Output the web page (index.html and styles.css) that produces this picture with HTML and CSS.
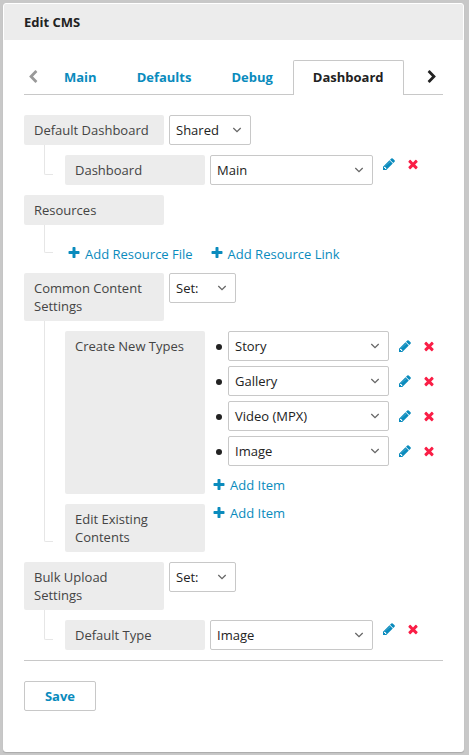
FILE: index.html
```html
<!DOCTYPE html>
<html lang="en">
<head>
<meta charset="utf-8">
<title>Edit CMS</title>
<link rel="stylesheet" href="styles.css">
</head>
<body>
<svg class="sprite" aria-hidden="true">
  <symbol id="pencil" viewBox="0 0 1792 1792"><path opacity=".7" d="M1014 608L491 1300 300 1290 350 1150 960 540z"/><path d="M491 1536l91-91-235-235-91 91v107h128v128h107zm523-928q0-22-22-22-10 0-17 7l-542 542q-7 7-7 17 0 22 22 22 10 0 17-7l542-542q7-7 7-17zm-54-192l416 416-832 832h-416v-416zm683 96q0 53-37 90l-166 166-416-416 166-165q36-38 90-38 53 0 91 38l235 234q37 39 37 91z"/></symbol>
  <symbol id="times" viewBox="0 0 1792 1792"><path d="M1490 1322q0 40-28 68l-136 136q-28 28-68 28t-68-28l-294-294-294 294q-28 28-68 28t-68-28l-136-136q-28-28-28-68t28-68l294-294-294-294q-28-28-28-68t28-68l136-136q28-28 68-28t68 28l294 294 294-294q28-28 68-28t68 28l136 136q28 28 28 68t-28 68l-294 294 294 294q28 28 28 68z"/></symbol>
  <symbol id="plus" viewBox="0 0 1792 1792"><path d="M1600 736v192q0 40-28 68t-68 28h-416v416q0 40-28 68t-68 28h-192q-40 0-68-28t-28-68v-416h-416q-40 0-68-28t-28-68v-192q0-40 28-68t68-28h416v-416q0-40 28-68t68-28h192q40 0 68 28t28 68v416h416q40 0 68 28t28 68z"/></symbol>
  <symbol id="prev" viewBox="0 0 1792 1792"><path d="M1427 301l-531 531 531 531q19 19 19 45t-19 45l-166 166q-19 19-45 19t-45-19l-742-742q-19-19-19-45t19-45l742-742q19-19 45-19t45 19l166 166q19 19 19 45t-19 45z"/></symbol>
  <symbol id="next" viewBox="0 0 1792 1792"><path d="M1363 877l-742 742q-19 19-45 19t-45-19l-166-166q-19-19-19-45t19-45l531-531-531-531q-19-19-19-45t19-45l166-166q19-19 45-19t45 19l742 742q19 19 19 45t-19 45z"/></symbol>
  <symbol id="caret" viewBox="0 0 10 6"><path d="M1.3 1L5 4.6 8.7 1" fill="none" stroke="#666" stroke-width="1.3"/></symbol>
</svg>
<main class="card">
  <h1 class="title">Edit CMS</h1>
  <div class="content">
    <nav class="tabs">
      <span class="arrow arrow-prev"><svg class="icon"><use href="#prev"/></svg></span>
      <a class="tab">Main</a>
      <a class="tab">Defaults</a>
      <a class="tab">Debug</a>
      <a class="tab active">Dashboard</a>
      <span class="arrow arrow-next"><svg class="icon"><use href="#next"/></svg></span>
    </nav>

    <div class="form">
      <div class="row">
        <div class="label">Default Dashboard</div>
        <div class="select shared">Shared<svg class="caret"><use href="#caret"/></svg></div>
      </div>
      <div class="nested">
        <div class="row">
          <div class="label">Dashboard</div>
          <div class="select wide">Main<svg class="caret"><use href="#caret"/></svg></div>
          <div class="actions raised"><svg class="icon edit"><use href="#pencil"/></svg><svg class="icon remove"><use href="#times"/></svg></div>
        </div>
      </div>

      <div class="row"><div class="label">Resources</div></div>
      <div class="nested links">
        <a class="add"><svg class="icon"><use href="#plus"/></svg>Add Resource File</a>
        <a class="add"><svg class="icon"><use href="#plus"/></svg>Add Resource Link</a>
      </div>

      <div class="row">
        <div class="label">Common Content Settings</div>
        <div class="select set">Set:<svg class="caret"><use href="#caret"/></svg></div>
      </div>
      <div class="nested">
        <div class="row stretch">
          <div class="label">Create New Types</div>
          <div class="list">
            <div class="item"><i class="dot"></i><div class="select">Story<svg class="caret"><use href="#caret"/></svg></div><div class="actions"><svg class="icon edit"><use href="#pencil"/></svg><svg class="icon remove"><use href="#times"/></svg></div></div>
            <div class="item"><i class="dot"></i><div class="select">Gallery<svg class="caret"><use href="#caret"/></svg></div><div class="actions"><svg class="icon edit"><use href="#pencil"/></svg><svg class="icon remove"><use href="#times"/></svg></div></div>
            <div class="item"><i class="dot"></i><div class="select">Video (MPX)<svg class="caret"><use href="#caret"/></svg></div><div class="actions"><svg class="icon edit"><use href="#pencil"/></svg><svg class="icon remove"><use href="#times"/></svg></div></div>
            <div class="item"><i class="dot"></i><div class="select">Image<svg class="caret"><use href="#caret"/></svg></div><div class="actions"><svg class="icon edit"><use href="#pencil"/></svg><svg class="icon remove"><use href="#times"/></svg></div></div>
            <a class="add item-add after-items"><svg class="icon"><use href="#plus"/></svg>Add Item</a>
          </div>
        </div>
        <div class="row">
          <div class="label">Edit Existing Contents</div>
          <div class="list"><a class="add item-add"><svg class="icon"><use href="#plus"/></svg>Add Item</a></div>
        </div>
      </div>

      <div class="row">
        <div class="label">Bulk Upload Settings</div>
        <div class="select set">Set:<svg class="caret"><use href="#caret"/></svg></div>
      </div>
      <div class="nested">
        <div class="row">
          <div class="label">Default Type</div>
          <div class="select wide">Image<svg class="caret"><use href="#caret"/></svg></div>
          <div class="actions raised"><svg class="icon edit"><use href="#pencil"/></svg><svg class="icon remove"><use href="#times"/></svg></div>
        </div>
      </div>
    </div>

    <div class="footer"><button class="save">Save</button></div>
  </div>
</main>
</body>
</html>
```

FILE: styles.css
```css
* { box-sizing: border-box; }

body {
  margin: 0;
  padding: 3px 5px 3px 3px;
  height: 755px;
  background: #c8c8c8;
  color: #222;
  font: 13px/18px "Open Sans", sans-serif;
}

.sprite { position: absolute; width: 0; height: 0; }

.card {
  height: 749px;
  background: #fff;
  border: 1px solid #fff;
  border-radius: 3px;
  box-shadow: 0 1px 1px #aaa;
}

.title {
  margin: 0;
  padding: 9px 20px;
  height: 36px;
  background: #ececec;
  font-size: 13px;
  line-height: 18px;
  font-weight: 700;
  border-radius: 2px 2px 0 0;
}

.content { padding: 20px 20px 0; }

.icon { display: block; flex: none; width: 14px; height: 14px; fill: currentColor; }

.tabs {
  display: flex;
  height: 35px;
  border-bottom: 1px solid #c8c8c8;
  font-weight: 700;
}

.tab {
  height: 35px;
  padding: 7px 19px 0;
  border: 1px solid transparent;
  border-bottom: 0;
  color: #0a8bbd;
}

.tab.active {
  color: #222;
  background: #fff;
  border-color: #c8c8c8;
  border-radius: 2px 2px 0 0;
}

.arrow { padding-top: 10px; }
.arrow-prev { width: 20px; padding-left: 1.6px; color: #999; }
.arrow-next { margin-left: auto; padding-right: 3.6px; }

.form {
  display: flex;
  flex-direction: column;
  gap: 10px;
  padding: 20px 0 10px;
}

.row { display: flex; gap: 5px; align-items: flex-start; }
.row.stretch { align-items: stretch; }

.label {
  flex: none;
  width: 140px;
  padding: 6px 10px;
  background: #ececec;
  border-radius: 2px;
  color: #444;
}

.select {
  display: flex;
  flex: none;
  align-items: center;
  justify-content: space-between;
  width: 161px;
  height: 30px;
  padding: 0 8.5px 0 6px;
  border: 1px solid #c8c8c8;
  border-radius: 2px;
  background: #fff;
}
.select.shared { width: 82px; }
.select.set { width: 67px; }
.select.wide { width: 163px; }

.caret { width: 10px; height: 6px; }

.actions { display: flex; gap: 10px; margin-left: 9px; }
.actions.raised { margin-left: 4px; padding-top: 2px; }
.edit { color: #0a8bbd; }
.remove { color: #fa1e46; }

.nested {
  position: relative;
  display: flex;
  flex-direction: column;
  gap: 10px;
  padding-left: 41px;
}

.nested::before {
  content: "";
  position: absolute;
  left: 20px;
  top: -10px;
  bottom: 10px;
  width: 8px;
  border: solid #e6e6e6;
  border-width: 0 0 1px 1px;
  border-bottom-left-radius: 2px;
}

.nested.links {
  flex-direction: row;
  gap: 17px;
  height: 28px;
  padding: 10px 0 0 43px;
}

.add { display: flex; align-items: center; gap: 4px; height: 18px; color: #0a8bbd; }
.links .icon { margin-top: -2px; }

.list { display: flex; flex-direction: column; gap: 5px; padding-left: 2px; }
.item { display: flex; align-items: center; }
.dot { width: 6px; height: 6px; margin: 1px 6px 0 4px; border-radius: 50%; background: #222; }
.item-add { height: 18px; }
.item-add .icon { margin-top: -1px; }
.after-items { height: 23px; padding-top: 5px; }

.footer { padding-top: 20px; border-top: 1px solid #c8c8c8; }

.save {
  display: block;
  width: 72px;
  height: 30px;
  padding: 0;
  border: 1px solid #c8c8c8;
  border-radius: 2px;
  background: #fff;
  color: #0a8bbd;
  font: 700 13px/18px "Open Sans", sans-serif;
}
```
